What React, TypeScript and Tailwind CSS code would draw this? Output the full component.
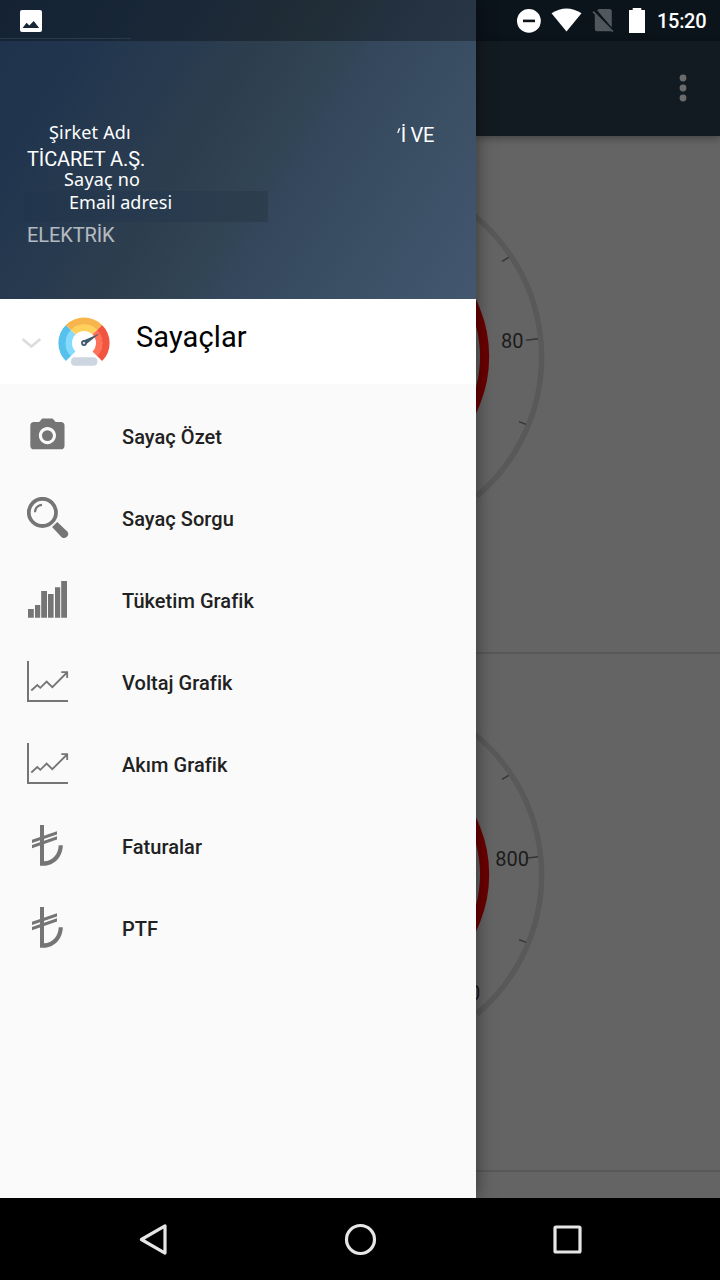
import type { ReactNode } from "react";

const arc = (cx: number, cy: number, r: number, a0: number, a1: number) => {
  const p = (a: number) => {
    const t = (a * Math.PI) / 180;
    return `${(cx + r * Math.cos(t)).toFixed(2)} ${(cy + r * Math.sin(t)).toFixed(2)}`;
  };
  return `M${p(a0)}A${r} ${r} 0 ${a1 - a0 > 180 ? 1 : 0} 1 ${p(a1)}`;
};

function Glyph({ children }: { children: ReactNode }) {
  return (
    <svg viewBox="0 0 42 42" className="h-[42px] w-[42px] shrink-0 fill-[#757575]">
      {children}
    </svg>
  );
}

const camera = (
  <Glyph>
    <g transform="translate(-.1 .1) scale(1.71)">
      <circle cx="12" cy="12" r="3.2" />
      <path d="M9 2L7.17 4H4c-1.1 0-2 .9-2 2v12c0 1.1.9 2 2 2h16c1.1 0 2-.9 2-2V6c0-1.1-.9-2-2-2h-3.17L15 2H9zm3 15c-2.76 0-5-2.24-5-5s2.24-5 5-5 5 2.24 5 5-2.24 5-5 5z" />
    </g>
  </Glyph>
);

const magnifier = (
  <Glyph>
    <circle cx="15.4" cy="15.4" r="13.6" fill="none" stroke="#757575" strokeWidth="3.8" />
    <path d="M8 15.2C8 11 11 8 15 7.9" fill="none" stroke="#757575" strokeWidth="2.2" />
    <path d="M30.3 25L40 34.2A4 4 0 0 1 34.4 39.9L25.1 30Z" />
  </Glyph>
);

const bars = (
  <Glyph>
    <path d="M1 30h5.8v8.7H1zM8 26h5.2v12.7H8zM14.2 12h5.8v26.7h-5.8zM21 15h5.6v23.7H21zM28 8.3h5.2v30.4H28zM34.2 2H40v36.7h-5.8z" />
  </Glyph>
);

const trend = (
  <Glyph>
    <path d="M0 0H2V39H41V41H0Z" />
    <path
      d="M4.3 29.5L10.3 24L13.3 26.8L19.6 20.5L25.3 26.2L40 11.5M34.3 11.2H40.2V17"
      fill="none"
      stroke="#757575"
      strokeWidth="1.8"
    />
  </Glyph>
);

const lira = (
  <Glyph>
    <path d="M13 0H17V36.3C25.5 36.3 31.5 29 31.7 20.3H35.8C35.6 32 27 40.8 17 40.8H13Z" />
    <path d="M5 14.8L30 6.2V9.4L5 18ZM5 20.1L30 11.3V14.5L5 23.3Z" />
  </Glyph>
);

const items: { label: string; icon: ReactNode }[] = [
  { label: "Sayaç Özet", icon: camera },
  { label: "Sayaç Sorgu", icon: magnifier },
  { label: "Tüketim Grafik", icon: bars },
  { label: "Voltaj Grafik", icon: trend },
  { label: "Akım Grafik", icon: trend },
  { label: "Faturalar", icon: lira },
  { label: "PTF", icon: lira },
];

function MeterLogo() {
  const c = 26;
  return (
    <svg viewBox="0 0 52 50" className="h-[50px] w-[52px]" fill="none">
      <path d={arc(c, c, 21.9, 135, 225)} stroke="#55c1ec" strokeWidth="7.4" />
      <path d={arc(c, c, 21.9, 225, 315)} stroke="#f8b54b" strokeWidth="7.4" />
      <path d={arc(c, c, 21.9, 315, 405)} stroke="#f1543f" strokeWidth="7.4" />
      <path d={arc(c, c, 15.2, 135, 225)} stroke="#84dbff" strokeWidth="6.4" />
      <path d={arc(c, c, 15.2, 225, 315)} stroke="#ffd05b" strokeWidth="6.4" />
      <path d={arc(c, c, 15.2, 315, 405)} stroke="#ff7058" strokeWidth="6.4" />
      <rect x="13" y="40.3" width="26.4" height="8.4" rx="4" fill="#cdd5e1" />
      <path d="M24.8 23.8L41.6 16.6L27.2 28Z" fill="#40596b" />
      <circle cx="26" cy="26" r="2.1" fill="#cdd5e1" stroke="#40596b" strokeWidth="1.6" />
    </svg>
  );
}

function Drawer() {
  return (
    <aside className="relative z-10 flex w-[476px] shrink-0 flex-col bg-[#fafafa] shadow-[0_0_16px_rgba(0,0,0,0.5)]">
      <header className="flex h-[299px] shrink-0 flex-col bg-[linear-gradient(122deg,#1e324b_0%,#21364e_18%,#283a4f_32%,#2d3f4e_44%,#314453_54%,#34475d_62%,#3b5065_80%,#43576f_100%)] text-[20px] text-white">
        <div className="h-[41px] shrink-0 bg-black/30">
          <div className="h-[39px] w-[131px] border-b border-[#2b3f54]/80 pt-[10px] pl-[20px]">
            <svg viewBox="0 0 22 22" className="h-[22px] w-[22px]">
              <rect width="22" height="22" rx="2" fill="#fff" />
              <path d="M2.6 18L6.6 12.8L9.3 15.6L13.7 11L19.2 18Z" fill="#182736" />
            </svg>
          </div>
        </div>
        <div className="flex flex-col pt-[78px]">
          <div className="flex h-[28px] justify-between pr-[42px] pl-[49px]">
            <span className="font-['Noto_Sans',sans-serif] text-[18px] leading-[27px] tracking-[0.18px]">Şirket Adı</span>
            <span className="flex pt-[4px] leading-[24px] tracking-[-0.3px]">
              <svg viewBox="0 0 4 24" className="h-[24px] w-[4px]">
                <path d="M0.2 10L1.8 5.2H3.4L1.4 10Z" fill="#fff" />
              </svg>
              İ VE
            </span>
          </div>
          <div className="h-[22px] pl-[27px] leading-[24px] tracking-[-0.1px]">TİCARET A.Ş.</div>
          <div className="h-[22px] pl-[64px] font-['Noto_Sans',sans-serif] text-[18px] leading-[20px] tracking-[0.2px]">
            Sayaç no
          </div>
          <div className="ml-[24px] h-[31px] w-[244px] bg-[linear-gradient(90deg,#21354c,#26394e_40%,#2d3e4e)] pl-[45px] font-['Noto_Sans',sans-serif] text-[18px] leading-[23px] tracking-[0.05px]">
            Email adresi
          </div>
          <div className="pt-[1px] pl-[27px] leading-[24px] tracking-[-0.1px] text-white/65">ELEKTRİK</div>
        </div>
      </header>

      <div className="flex h-[85px] shrink-0 items-start bg-white pl-[21px]">
        <svg viewBox="0 0 21 12" className="mt-[38px] h-[12px] w-[21px]">
          <path d="M1.5 2L10.4 9.6L19.3 2" fill="none" stroke="#dcdcdc" strokeWidth="2.6" />
        </svg>
        <div className="mt-[18px] ml-[16.4px]">
          <MeterLogo />
        </div>
        <span className="mt-[20px] ml-[25.6px] text-[29px] leading-[36px] tracking-[0.1px] text-black">Sayaçlar</span>
      </div>

      <nav className="flex flex-col pt-[12px]">
        {items.map((item) => (
          <a key={item.label} className="flex h-[82px] items-start pt-[19px] pl-[27px]">
            {item.icon}
            <span className="mt-[10px] ml-[53px] text-[20px] leading-[24px] font-medium tracking-[0.04px] text-[#212121]">
              {item.label}
            </span>
          </a>
        ))}
      </nav>
    </aside>
  );
}

function Gauge({ label, endLabel }: { label: string; endLabel?: string }) {
  return (
    <section className="h-[518px] shrink-0 border-b-2 border-[#585858]">
      <svg viewBox="476 136 244 516" className="block h-[516px] w-[244px]" fill="none">
        <circle cx="360" cy="356.5" r="120" fill="#606462" />
        <circle cx="360" cy="356.5" r="124.6" stroke="#6b0000" strokeWidth="9.2" />
        <path d={arc(360, 357, 181.6, -60, 50)} stroke="#595959" strokeWidth="5.4" />
        <path d="M502 261.3L508.7 257.3M526 340.3L538 338.8M519 421.6L526 424.4" stroke="#353535" strokeWidth="1.5" />
        <text x="512.2" y="348" textAnchor="middle" className="fill-[#1c1c1c] text-[20px]">
          {label}
        </text>
        {endLabel && (
          <text x="480.3" y="482" textAnchor="end" className="fill-[#1c1c1c] text-[20px]">
            {endLabel}
          </text>
        )}
      </svg>
    </section>
  );
}

function Page() {
  return (
    <main className="flex w-[244px] flex-col overflow-hidden bg-[#646464]">
      <div className="flex h-[41px] shrink-0 items-start bg-[#0b131b] pt-[7px] pl-[40px] text-white">
        <svg viewBox="516 7 132 28" className="h-[28px] w-[132px]">
          <circle cx="528.9" cy="20.9" r="11.9" fill="#fff" />
          <path d="M523 20.9H535" stroke="#0b131b" strokeWidth="2.6" />
          <path d="M551.5 13.2Q566.5 3.8 581.5 13.2L566.5 31.5Z" fill="#fff" />
          <path d="M597 10.2L599 9H609.5Q611.8 9 611.8 11.3V27.5ZM594.8 14.2L611.5 31Q611 31.2 610 31.2H597Q594.8 31.2 594.8 29Z" fill="#50575d" />
          <path d="M593 11.7L612.8 31.6" stroke="#50575d" strokeWidth="1.8" />
          <path d="M632.7 8H641.3V10H645V33H629V10H632.7Z" fill="#fff" />
        </svg>
        <span className="ml-[9px] pt-[2px] text-[20px] leading-[24px] font-medium tracking-[-0.3px]">15:20</span>
      </div>
      <div className="relative z-[1] flex h-[95px] shrink-0 items-start justify-end bg-[#131b22] pt-[33px] pr-[33px] shadow-[0_2px_8px_rgba(0,0,0,0.35)]">
        <svg viewBox="0 0 8 28" className="h-[28px] w-[8px] fill-[#6b6b6b]">
          <circle cx="4" cy="4" r="3.4" />
          <circle cx="4" cy="14" r="3.4" />
          <circle cx="4" cy="24" r="3.4" />
        </svg>
      </div>
      <Gauge label="80" />
      <Gauge label="800" endLabel="0" />
    </main>
  );
}

function SystemNav() {
  return (
    <footer className="relative z-20 flex h-[82px] shrink-0 items-center justify-center bg-black">
      {[
        <path key="back" d="M5.4 17.5L29 3.9V31.1Z" />,
        <circle key="home" cx="17.5" cy="17.5" r="14" />,
        <rect key="recent" x="5" y="5" width="25" height="25" rx="1" />,
      ].map((shape, i) => (
        <span key={i} className="flex w-[207px] justify-center">
          <svg viewBox="0 0 35 35" className="h-[35px] w-[35px]" fill="none" stroke="#e6e6e6" strokeWidth="3.2" strokeLinejoin="round">
            {shape}
          </svg>
        </span>
      ))}
    </footer>
  );
}

export default function App() {
  return (
    <div className="flex h-[1280px] w-[720px] flex-col overflow-hidden bg-black font-[Roboto,sans-serif]">
      <div className="flex h-[1198px] shrink-0 overflow-hidden bg-[#646464]">
        <Drawer />
        <Page />
      </div>
      <SystemNav />
    </div>
  );
}
